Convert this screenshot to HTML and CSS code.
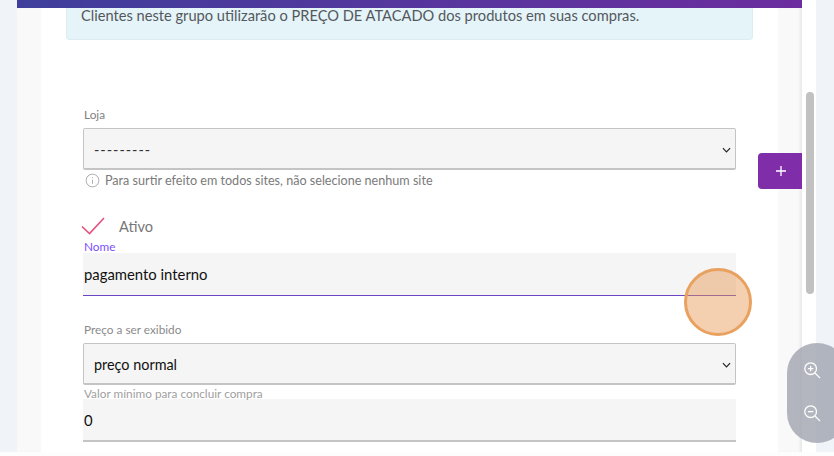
FILE: index.html
```html
<!DOCTYPE html>
<html lang="pt-BR">
<head>
<meta charset="utf-8">
<title>Grupo de clientes</title>
<link rel="stylesheet" href="styles.css">
</head>
<body>
<div class="page">
  <div class="window">
    <div class="topbar"></div>
    <div class="gutter">
      <main class="card">
        <div class="alert">Clientes neste grupo utilizarão o PREÇO DE ATACADO dos produtos em suas compras.</div>
        <form class="form">
          <div class="label label-loja">Loja</div>
          <div class="select select-empty"><span>---------</span>
            <svg class="chevron" viewBox="0 0 10 6"><path d="M1 1l4 4 4-4"/></svg>
          </div>
          <div class="help">
            <svg class="info" viewBox="0 0 16 16"><circle cx="8" cy="8" r="6.8"/><path d="M8 7.2v4.2M8 4.4v1.2"/></svg>
            <span>Para surtir efeito em todos sites, não selecione nenhum site</span>
          </div>
          <div class="check">
            <svg class="tick" viewBox="0 0 24 18"><path d="M1 9.5l7.5 7L23 1"/></svg>
            <span>Ativo</span>
          </div>
          <div class="label label-nome">Nome</div>
          <div class="input input-active">pagamento interno</div>
          <div class="label label-preco">Preço a ser exibido</div>
          <div class="select select-dark"><span>preço normal</span>
            <svg class="chevron" viewBox="0 0 10 6"><path d="M1 1l4 4 4-4"/></svg>
          </div>
          <div class="label label-valor">Valor mínimo para concluir compra</div>
          <div class="input input-plain">0</div>
        </form>
      </main>
    </div>
  </div>
  <div class="track"><div class="thumb"></div></div>
</div>

<button class="add" type="button" aria-label="Adicionar">
  <svg viewBox="0 0 12 12"><path d="M6 1v10M1 6h10"/></svg>
</button>
<div class="marker"></div>
<div class="zoom">
  <svg viewBox="0 0 20 20"><circle cx="8.5" cy="8.5" r="6.5"/><path d="M13.3 13.3l5.7 5.7M8.5 5.5v6M5.5 8.5h6"/></svg>
  <svg viewBox="0 0 20 20"><circle cx="8.5" cy="8.5" r="6.5"/><path d="M13.3 13.3l5.7 5.7M5.5 8.5h6"/></svg>
</div>
</body>
</html>
```
FILE: styles.css
```css
* { box-sizing: border-box; }
html, body { margin: 0; height: 456px; overflow: hidden; }
body {
  background: #fdfdfd;
  font-family: "Lato", "Liberation Sans", sans-serif;
  position: relative;
}
.page { display: flex; height: 452px; padding-left: 17px; background: #f0f4f8; overflow: hidden; }
.window { width: 785px; display: flex; flex-direction: column; }
.topbar { height: 8px; flex: none; background: linear-gradient(90deg, #3f3f9b, #6c2d9e); }
.gutter { flex: 1; background: #f9f9f9; padding: 0 24px; min-height: 0; box-shadow: inset -3px 0 3px -1px rgba(0,0,0,.07); }
.card { background: #fff; height: 100%; padding: 0 25px; }
.alert {
  height: 32px; padding: 0 14px; font-size: 14.65px; line-height: 16px; color: #54585c;
  background: #e4f4f9; border: 1px solid #dcecf1; border-top: 0; border-radius: 0 0 4px 4px;
}
.form { padding: 0 17px; }
.label { font-size: 11.8px; line-height: 14px; color: #7f7f7f; padding-left: 1px; }
.label-loja { margin-top: 68px; }
.label-nome { color: #7c4dff; margin-top: 3px; height: 13px; line-height: 13px; }
.label-preco { margin-top: 27px; color: #8a8a8a; }
.label-valor { margin-top: 3px; color: #a0a0a0; line-height: 11px; height: 11px; }
.select {
  height: 42px; margin-top: 6px; display: flex; align-items: center; justify-content: space-between;
  padding: 2px 4px 0 10px; background: #f5f5f5; border: 1px solid #c4c4c4; border-bottom-width: 2px; border-radius: 2px;
  font-size: 14.4px; color: #333;
}
.select-dark { color: #111; }
.select-empty { letter-spacing: 1px; }
.chevron { width: 9px; height: 6px; fill: none; stroke: #222; stroke-width: 1.3; }
.help { display: flex; align-items: center; gap: 5px; height: 20px; padding-left: 2px; font-size: 12.6px; color: #7a7a7a; }
.info { width: 15px; height: 15px; fill: none; stroke: #a8a8a8; stroke-width: 1; }
.check { display: flex; align-items: center; gap: 14px; margin-top: 25px; height: 22px; font-size: 14.6px; color: #777; margin-left: -2px; }
.tick { width: 24px; height: 18px; fill: none; stroke: #e5507e; stroke-width: 1.6; }
.input {
  height: 43px; background: #f5f5f5; border-bottom: 1px solid #c4c4c4; font-size: 14.85px; line-height: 42px; color: #111; padding-left: 1px;
}
.input-active { border-bottom-color: #6a45c4; }
.input-plain { border-bottom-width: 2px; }
.track { width: 14px; background: #fff; padding: 92px 4px 0; }
.thumb { width: 8px; height: 202px; background: #c1c1c1; border-radius: 4px; }
.add {
  position: absolute; left: 758px; top: 153px; width: 44px; height: 36px; padding: 0 0 0 2px; border: 0;
  background: #7f2da8; border-radius: 4px 0 0 4px; display: flex; align-items: center; justify-content: center;
}
.add svg { width: 12px; height: 12px; fill: none; stroke: #fff; stroke-width: 1.3; }
.marker {
  position: absolute; left: 684px; top: 268px; width: 68px; height: 68px; border-radius: 50%;
  background: rgba(230,150,80,.45); border: 3px solid #e8a15e;
}
.zoom {
  position: absolute; left: 787px; top: 343px; width: 60px; height: 100px; border-radius: 30px;
  background: rgba(160,164,175,.8); display: flex; flex-direction: column; gap: 25px; padding: 18px 0 0 16px;
}
.zoom svg { width: 18px; height: 18px; fill: none; stroke: #fff; stroke-width: 1.4; }
```
